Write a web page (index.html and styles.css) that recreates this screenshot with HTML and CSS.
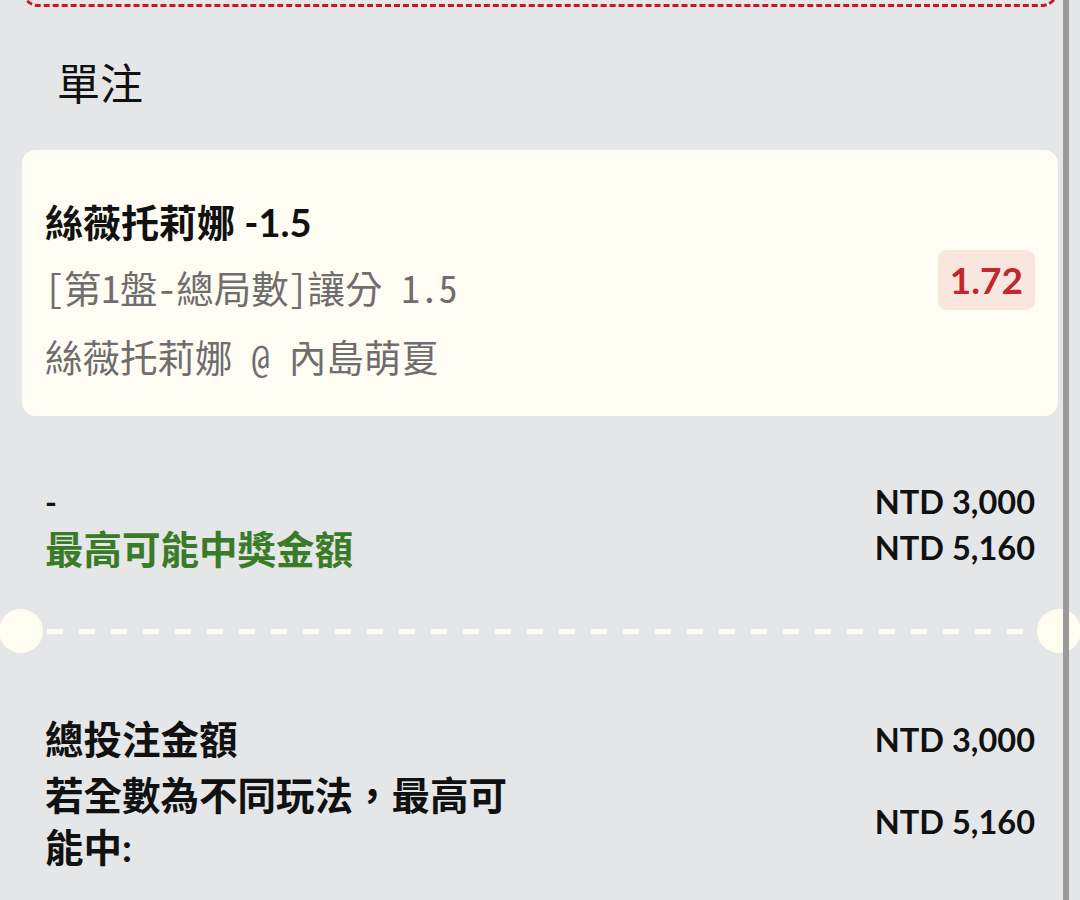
FILE: index.html
```html
<!DOCTYPE html>
<html lang="zh-Hant">
<head>
<meta charset="utf-8">
<title>單注</title>
<link rel="stylesheet" href="styles.css">
</head>
<body>
<div class="page">
  <div class="prev-box"></div>
  <h2 class="section-title">單注</h2>
  <div class="bet-card">
    <div class="bet-info">
      <div class="bet-name">絲薇托莉娜 -1.5</div>
      <div class="bet-market">[第1盤-總局數]讓分 1.5</div>
      <div class="bet-match">絲薇托莉娜 @ 內島萌夏</div>
    </div>
    <div class="odds">1.72</div>
  </div>
  <div class="summary">
    <div class="row">
      <div class="label dash">-</div>
      <div class="value">NTD 3,000</div>
    </div>
    <div class="row">
      <div class="label green">最高可能中獎金額</div>
      <div class="value">NTD 5,160</div>
    </div>
  </div>
  <div class="separator">
    <span class="notch"></span>
    <span class="dashes"></span>
    <span class="notch"></span>
  </div>
  <div class="totals">
    <div class="row total-row">
      <div class="label">總投注金額</div>
      <div class="value">NTD 3,000</div>
    </div>
    <div class="row total-row">
      <div class="label wrap">若全數為不同玩法，最高可能中:</div>
      <div class="value">NTD 5,160</div>
    </div>
  </div>
</div>
<div class="scrollbar"></div>
</body>
</html>
```

FILE: styles.css
```css
html, body {
  margin: 0;
  padding: 0;
  background: #e5e6e8;
  height: 100%;
  overflow: hidden;
}
body {
  font-family: "Lato", "Noto Sans CJK TC", sans-serif;
  color: #111;
}
.page {
  padding: 0 22px;
}
.prev-box {
  box-sizing: border-box;
  height: 46px;
  margin-top: -39px;
  border: 3px dashed #c8152b;
  border-radius: 16px;
}
.section-title {
  margin: 48px 0 35px 35px;
  font-family: "Roboto", "Noto Sans CJK TC", sans-serif;
  font-weight: 400;
  font-size: 43px;
  line-height: 60px;
  color: #111;
}
.bet-card {
  display: flex;
  align-items: center;
  justify-content: space-between;
  background: #fffdf3;
  border-radius: 14px;
  padding: 40px 23px 24px 23px;
}
.bet-name {
  font-weight: 700;
  font-size: 38px;
  line-height: 64px;
  color: #111;
}
.bet-market, .bet-match {
  font-family: "Noto Sans CJK TC", "Roboto", sans-serif;
  font-feature-settings: "hwid" 1;
  font-size: 37.5px;
  color: #6e6e6e;
}
.bet-market { line-height: 66px; }
.bet-match { line-height: 72px; }
.odds {
  background: #f8e6df;
  color: #c1272d;
  font-weight: 700;
  font-size: 37px;
  line-height: 60px;
  padding: 0 12px;
  border-radius: 9px;
  margin-top: -22px;
}
.summary {
  margin-top: 62px;
  padding: 0 23px;
}
.row {
  display: flex;
  justify-content: space-between;
  align-items: center;
}
.summary .row {
  height: 46px;
}
.label {
  font-weight: 700;
  font-size: 38.5px;
  color: #111;
}
.label.dash {
  font-size: 32px;
}
.label.green {
  color: #3a7b27;
}
.value {
  font-weight: 700;
  font-size: 32.5px;
  color: #111;
}
.separator {
  display: flex;
  align-items: center;
  margin: 39px -22px 0 -22px;
  height: 44px;
}
.notch {
  flex: 0 0 44px;
  height: 44px;
  border-radius: 50%;
  background: #fffdf0;
}
.separator .notch:first-child { margin-left: -1px; }
.separator .notch:last-child { margin-right: -1px; }
.dashes {
  flex: 1;
  height: 5px;
  margin: 0 4px;
  background: repeating-linear-gradient(to right, #fffdf3 0 16px, transparent 16px 32px);
}
.totals {
  margin-top: 60px;
  padding: 0 23px;
}
.total-row {
  margin-bottom: 4px;
}
.total-row .label {
  line-height: 52px;
}
.label.wrap {
  width: 480px;
}
.scrollbar {
  position: fixed;
  top: 0;
  bottom: 0;
  left: 1063px;
  width: 6px;
  background: #9a9a9a;
}
```
